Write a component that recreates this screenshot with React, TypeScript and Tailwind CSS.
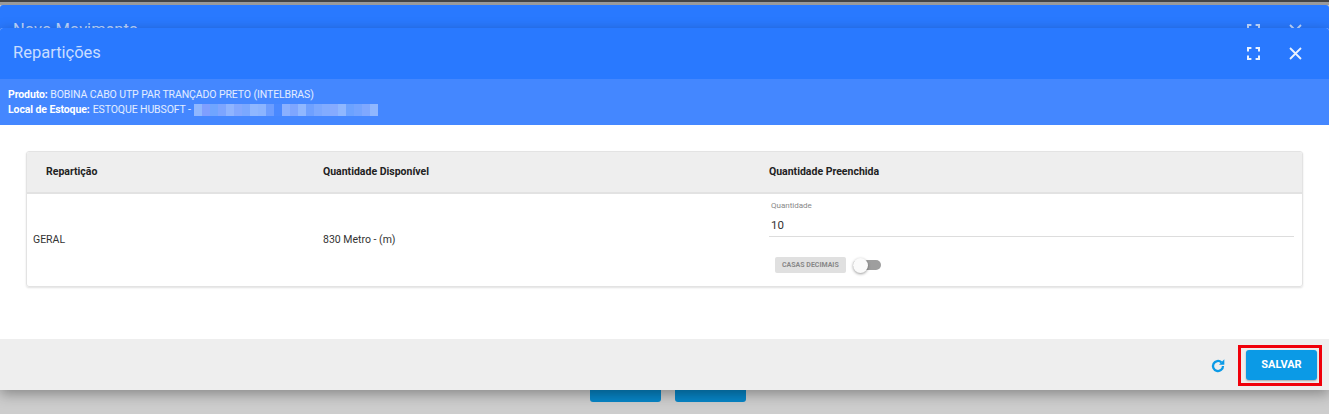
import { useState } from "react";

const font = "font-['Roboto',sans-serif]";

function ExpandIcon() {
  return (
    <svg width="13" height="13" viewBox="0 0 13 13" fill="none" stroke="currentColor" strokeWidth="2">
      <path d="M1 4.4V1h3.4M8.6 1H12v3.4M12 8.6V12H8.6M4.4 12H1V8.6" />
    </svg>
  );
}

function CloseIcon() {
  return (
    <svg width="13" height="13" viewBox="0 0 13 13" fill="none" stroke="currentColor" strokeWidth="1.8">
      <path d="M1 1l11 11M12 1L1 12" />
    </svg>
  );
}

function ReloadIcon() {
  return (
    <svg width="16" height="16" viewBox="0 0 24 24" fill="none" stroke="#0b9ae6" strokeWidth="3.4">
      <path d="M19.5 12a7.5 7.5 0 1 1-2.4-5.5" />
      <path d="M21.5 2v8h-8z" fill="#0b9ae6" strokeWidth="0" />
    </svg>
  );
}

// pale blocks that hide the address in the header
const blurColors = [
  "bg-[#8fb7ff]", "bg-[#7f9fff]", "bg-[#6fa5ff]", "bg-[#7da5ff]", "bg-[#8fb4ff]", "bg-[#82a8ff]",
  "bg-[#7aa8ff]", "bg-[#8fb7ff]", "bg-[#8bb4ff]", "bg-[#6c9dff]", "bg-[#4a89ff]", "bg-[#8ab0ff]",
  "bg-[#7ea6ff]", "bg-[#8fb7ff]", "bg-[#6ea0ff]", "bg-[#7ba8ff]", "bg-[#82acff]", "bg-[#86abff]",
  "bg-[#8fb7ff]", "bg-[#6ca2ff]", "bg-[#74a4ff]", "bg-[#7fa8ff]", "bg-[#8fb7ff]",
];

function App() {
  const [decimals, setDecimals] = useState(false);

  return (
    <div className={`${font} relative h-[414px] w-[1329px] overflow-hidden bg-[#cdcdcd] pt-[5px]`}>
      <div className="absolute inset-x-0 top-0 h-[2px] bg-[#444444]" />
      <div className="absolute inset-x-0 top-[2px] h-[3px] bg-[#9a9a9a]" />

      {/* dialog underneath */}
      <div className="rounded-t-[3px] bg-[#2979ff]">
        <div className="flex h-[60px] items-start justify-between pl-[13px] pr-[27px] pt-[15px] text-white/70">
          <span className="text-[16.5px] leading-[20px]">Novo Movimento</span>
          <div className="flex items-center gap-[29px] pt-[4px]">
            <ExpandIcon />
            <CloseIcon />
          </div>
        </div>
      </div>
      <div className="absolute bottom-[12px] left-[590px] flex gap-[14px] text-[11.5px] font-bold text-white">
        <div className="flex h-[36px] w-[71px] items-center justify-center rounded-[3px] bg-[#0785c6]">ANTERIOR</div>
        <div className="flex h-[36px] w-[71px] items-center justify-center rounded-[3px] bg-[#0785c6]">PRÓXIMO</div>
      </div>

      {/* dialog on top */}
      <div className="absolute inset-x-0 top-[28px] flex h-[362px] flex-col rounded-t-[3px] bg-white shadow-[0_4px_14px_rgba(0,0,0,0.35)]">
        <div className="flex h-[51px] shrink-0 items-center justify-between rounded-t-[3px] bg-[#2979ff] pl-[13px] pr-[27px] text-white/90">
          <h1 className="text-[16.5px] font-normal text-white/75">Repartições</h1>
          <div className="flex items-center gap-[29px]">
            <ExpandIcon />
            <CloseIcon />
          </div>
        </div>

        <div className="flex h-[46px] shrink-0 flex-col justify-center bg-[#4487ff] pl-[8px] text-[10.5px] leading-[15.5px] tracking-[-0.1px] text-white/85">
          <div>
            <b className="font-bold text-white">Produto:</b> BOBINA CABO UTP PAR TRANÇADO PRETO (INTELBRAS)
          </div>
          <div className="flex items-center">
            <b className="mr-[3px] font-bold text-white">Local de Estoque:</b> ESTOQUE HUBSOFT -
            <div className="ml-[3px] flex h-[12px] w-[184px]">
              {blurColors.map((c, i) => (
                <div key={i} className={`${c} flex-1`} />
              ))}
            </div>
          </div>
        </div>

        <div className="flex-1 px-[26px] pt-[26px]">
          <div className="overflow-hidden rounded-[3px] border border-[#e3e3e3] shadow-[0_1px_2px_rgba(0,0,0,0.12)]">
            <div className="flex h-[42px] items-center border-b-2 border-[#e2e2e2] bg-[#eeeeee] text-[10.5px] font-bold text-[#222222]">
              <div className="w-[296px] pl-[19px]">Repartição</div>
              <div className="w-[446px]">Quantidade Disponível</div>
              <div>Quantidade Preenchida</div>
            </div>
            <div className="flex h-[92px] items-center text-[10.5px] text-[#333333]">
              <div className="w-[296px] pl-[6px]">GERAL</div>
              <div className="w-[446px]">830 Metro - (m)</div>
              <div className="flex h-full flex-1 flex-col pr-[8px] pt-[6px]">
                <div className="border-b border-[#dddddd] pl-[2px]">
                  <div className="text-[8px] leading-[12px] text-[#888888]">Quantidade</div>
                  <div className="h-[24px] pt-[5px] text-[11.5px] leading-[16px] text-[#333333]">10</div>
                </div>
                <div className="flex items-center gap-[7px] pl-[6px] pt-[20px]">
                  <span className="rounded-[2px] bg-[#e0e0e0] px-[7px] py-[3px] text-[7px] leading-[10px] font-bold text-[#888888]">
                    CASAS DECIMAIS
                  </span>
                  <button
                    type="button"
                    onClick={() => setDecimals(!decimals)}
                    className="relative h-[10px] w-[28px] rounded-full bg-[#9e9e9e]"
                  >
                    <span className="absolute -top-[2px] left-0 h-[15px] w-[15px] rounded-full bg-[#fafafa] shadow-[0_1px_3px_rgba(0,0,0,0.4)]" />
                  </button>
                </div>
              </div>
            </div>
          </div>
        </div>

        <div className="flex h-[51px] shrink-0 items-start justify-end gap-[12px] bg-[#eeeeee] pr-[7px] pt-[6px]">
          <div className="pt-[13px]">
            <ReloadIcon />
          </div>
          <div className="border-[3px] border-[#f0000a] pb-[3px] pl-[5px] pr-[2px] pt-[2px]">
            <button
              type="button"
              className="flex h-[30px] w-[71px] items-center justify-center rounded-[3px] bg-[#0b9ae6] text-[11px] font-bold text-white shadow-[0_1px_2px_rgba(0,0,0,0.3)]"
            >
              SALVAR
            </button>
          </div>
        </div>
      </div>
    </div>
  );
}

export default App;
